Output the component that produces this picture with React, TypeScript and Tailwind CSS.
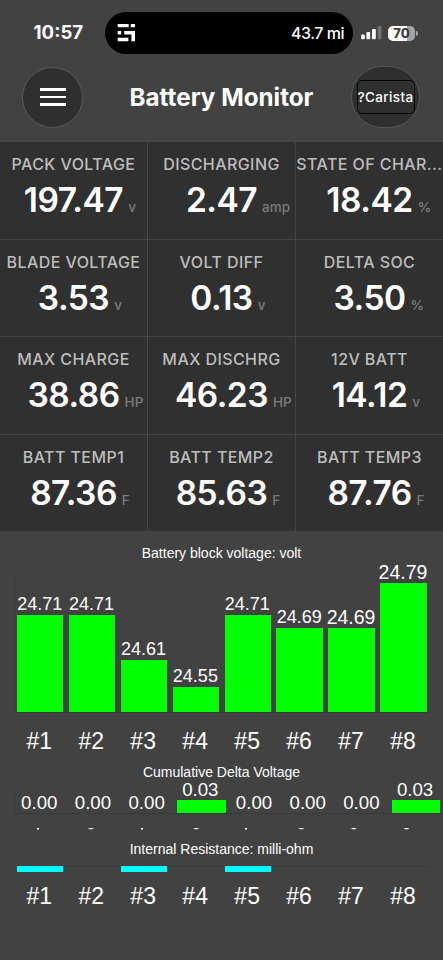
import clsx from 'clsx'

const readings = [
  { label: 'PACK VOLTAGE', value: '197.47', unit: 'v' },
  { label: 'DISCHARGING', value: '2.47', unit: 'amp' },
  { label: 'STATE OF CHAR...', value: '18.42', unit: '%' },
  { label: 'BLADE VOLTAGE', value: '3.53', unit: 'v' },
  { label: 'VOLT DIFF', value: '0.13', unit: 'v' },
  { label: 'DELTA SOC', value: '3.50', unit: '%' },
  { label: 'MAX CHARGE', value: '38.86', unit: 'HP' },
  { label: 'MAX DISCHRG', value: '46.23', unit: 'HP' },
  { label: '12V BATT', value: '14.12', unit: 'v' },
  { label: 'BATT TEMP1', value: '87.36', unit: 'F' },
  { label: 'BATT TEMP2', value: '85.63', unit: 'F' },
  { label: 'BATT TEMP3', value: '87.76', unit: 'F' },
]

// heights are in pixels
const blocks = [
  { value: '24.71', height: 97 },
  { value: '24.71', height: 97 },
  { value: '24.61', height: 52 },
  { value: '24.55', height: 25 },
  { value: '24.71', height: 97 },
  { value: '24.69', height: 84 },
  { value: '24.69', height: 84, large: true },
  { value: '24.79', height: 129, large: true },
]

const deltas = ['0.00', '0.00', '0.00', '0.03', '0.00', '0.00', '0.00', '0.03']
const resistance = [true, false, true, false, true, false, false, false]

// only the feet of the axis digits are visible in the delta chart
const feet = ['dot', 'arc', 'dot', 'arc', 'dot', 'arc', 'arc', 'arc']

function StatusBar() {
  return (
    <div className="flex h-[66px] items-center pl-[33.5px] text-white">
      <span className="w-[71.5px] text-[18.7px] font-bold">10:57</span>
      <div className="flex h-[42px] w-[248px] items-center justify-between rounded-full bg-black pr-[9px] pl-[12px]">
        <svg className="h-[18px] w-[18px]" viewBox="0 0 18 18" fill="white">
          <path d="M.7 0h11v3.2H.7zM13.8 0H18v3.2h-4.2zM.7 7h3.5v3.6H.7zM7.2 7H18v10.2h-3.6v-6.6H7.2zM.7 13.7h10.7v3.5H.7z" />
        </svg>
        <span className="text-[16px] font-medium tracking-[-0.5px]">43.7 mi</span>
      </div>
      <svg className="ml-[8px] h-[14px] w-[22px]" viewBox="0 0 22 14" fill="white">
        <rect x="0" y="8.5" width="3.8" height="4.8" rx="1" />
        <rect x="5.4" y="6" width="3.8" height="7.3" rx="1" />
        <rect x="11" y="3" width="3.8" height="10.3" rx="1" />
        <rect x="16.7" y="0" width="3.8" height="13.3" rx="1" fillOpacity="0.25" />
      </svg>
      <div className="ml-[5px] flex h-[15px] w-[27px] items-center justify-center rounded-[5px] bg-[linear-gradient(to_right,white_70%,#a5a5a5_70%)] text-[13px] leading-[14px] font-extrabold text-[#3c3c3c]">
        70
      </div>
      <div className="ml-px h-[5px] w-[1.5px] rounded-r bg-[#a5a5a5]" />
    </div>
  )
}

function Header() {
  return (
    <header className="flex h-[75px] items-center pb-[13px] pl-[22px] text-white">
      <button
        aria-label="Menu"
        className="flex h-[61px] w-[61px] flex-col items-center justify-center gap-[5px] rounded-full border border-[#595959] bg-[#2f2f2f]"
      >
        <span className="h-[2.6px] w-[26px] bg-white" />
        <span className="h-[2.6px] w-[26px] bg-white" />
        <span className="h-[2.6px] w-[26px] bg-white" />
      </button>
      <h1 className="w-[268px] pt-[2px] pl-[9px] text-center text-[24.2px] font-bold whitespace-nowrap">
        Battery Monitor
      </h1>
      <button className="flex h-[62px] w-[69px] items-center justify-center rounded-full border border-[#565656] bg-[#2f2f2f]">
        <span className="flex h-[34px] w-[58px] items-center justify-center rounded-[5px] border-[1.5px] border-black text-[13.5px] font-medium tracking-[0.35px]">
          ?Carista
        </span>
      </button>
    </header>
  )
}

function ReadingsGrid() {
  return (
    <section className="grid h-[391px] grid-cols-[148px_148px_147px] grid-rows-4 border-t border-[#454545]">
      {readings.map((item) => (
        <div
          key={item.label}
          className="overflow-hidden border-r border-b border-[#454545] bg-[#303030] pt-[12px] nth-[3n]:border-r-0"
        >
          <div className="text-center text-[16px] leading-[20px] font-medium tracking-[0.42px] whitespace-nowrap text-[#bdbdbd]">
            {item.label}
          </div>
          <div className="grid grid-cols-[1fr_auto_1fr] items-baseline pt-[7px]">
            <span />
            <span className="text-[33.5px] leading-[38px] font-semibold tracking-[-0.5px] text-white">
              {item.value}
            </span>
            <span className="w-0 pl-[5px] text-[13.5px] font-medium text-[#7c7c7c]">{item.unit}</span>
          </div>
        </div>
      ))}
    </section>
  )
}

function AxisLabels() {
  return (
    <div className="ml-[14px] flex gap-[5.6px] pl-[2px] text-center text-[23px] leading-[26px] text-white">
      {blocks.map((_, i) => (
        <span key={i} className="w-[46.4px] shrink-0">
          #{i + 1}
        </span>
      ))}
    </div>
  )
}

function ChartTitle({ children }: { children: string }) {
  return <h2 className="text-center text-[14px] leading-[16px] text-white">{children}</h2>
}

export default function App() {
  return (
    <div className="h-[960px] w-[443px] overflow-hidden bg-[#424242] font-['Inter',sans-serif]">
      <StatusBar />
      <Header />
      <ReadingsGrid />

      <div className="font-['Liberation_Sans',Arial,sans-serif]">
        {/* Block voltage */}
        <section className="h-[224px] pt-[13px]">
          <ChartTitle>Battery block voltage: volt</ChartTitle>
          <div className="ml-[14px] flex h-[151px] items-end">
            <div className="mr-[2px] h-[137px] w-px shrink-0 bg-[#393939]" />
            {blocks.map((block, i) => (
              <div key={i} className="mr-[5.5px] flex w-[46.4px] shrink-0 flex-col items-center">
                <span
                  className={clsx(
                    '-ml-px leading-[21px] text-white',
                    block.large ? 'text-[19.5px]' : 'text-[18px]',
                  )}
                >
                  {block.value}
                </span>
                <div className="w-full bg-[#00ff00]" style={{ height: block.height }} />
              </div>
            ))}
          </div>
          <div className="mr-[14px] mb-[15px] ml-[14px] h-px bg-[#393939]" />
          <AxisLabels />
        </section>

        {/* Cumulative delta */}
        <section className="h-[85px] pt-[8px]">
          <ChartTitle>Cumulative Delta Voltage</ChartTitle>
          <div className="ml-[14px] flex h-[34px] items-end border-b border-[#393939]">
            <div className="mr-px h-[20px] w-px shrink-0 bg-[#393939]" />
            {deltas.map((value, i) => (
              <div
                key={i}
                className="mr-[5.2px] w-[48.5px] shrink-0 text-center text-[18.7px] leading-[20px] text-white"
              >
                <span className="-ml-[2px]">{value}</span>
                {value !== '0.00' && <div className="h-[13px] bg-[#00ff00]" />}
              </div>
            ))}
          </div>
          <svg className="mt-[14px] h-[4px] w-full" viewBox="0 0 443 4" fill="white">
            {feet.map((foot, i) =>
              foot === 'dot' ? (
                <path key={i} d={`M${37 + i * 52} 0h2v1.4h-2z`} />
              ) : (
                <path key={i} d={`M${35.3 + i * 52.6} 0h6q-3 2.8-6 0z`} />
              ),
            )}
          </svg>
        </section>

        {/* Internal resistance */}
        <section>
          <ChartTitle>Internal Resistance: milli-ohm</ChartTitle>
          <div className="mt-[9px] mr-[14px] mb-[11px] ml-[14px] flex h-[6px] gap-[5.5px] border-t border-[#393939] pl-[3px]">
            {resistance.map((on, i) => (
              <div key={i} className={clsx('-mt-px h-[6px] w-[46.4px] shrink-0', on && 'bg-[#00ffff]')} />
            ))}
          </div>
          <AxisLabels />
        </section>
      </div>
    </div>
  )
}
